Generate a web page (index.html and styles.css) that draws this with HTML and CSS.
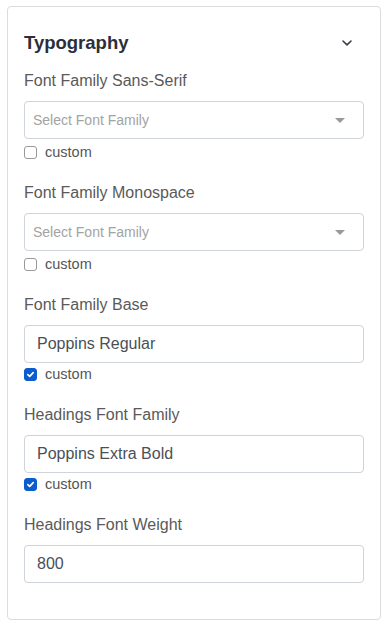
FILE: index.html
```html
<!DOCTYPE html>
<html lang="en">
<head>
<meta charset="utf-8">
<title>Typography</title>
<link rel="stylesheet" href="styles.css">
</head>
<body>
<div class="card">
  <div class="card-head">
    <h2 class="title">Typography</h2>
    <svg class="chevron" width="12" height="8" viewBox="0 0 12 8"><path d="M2 2 L6 5.8 L10 2" fill="none" stroke="#3a3d48" stroke-width="1.6" stroke-linecap="round" stroke-linejoin="round"/></svg>
  </div>

  <div class="group sel">
    <div class="label">Font Family Sans-Serif</div>
    <div class="select"><span class="placeholder">Select Font Family</span><span class="caret"></span></div>
    <label class="check"><span class="box"></span>custom</label>
  </div>

  <div class="group sel">
    <div class="label">Font Family Monospace</div>
    <div class="select"><span class="placeholder">Select Font Family</span><span class="caret"></span></div>
    <label class="check"><span class="box"></span>custom</label>
  </div>

  <div class="group">
    <div class="label">Font Family Base</div>
    <div class="input">Poppins Regular</div>
    <label class="check"><span class="box on"><svg width="9" height="9" viewBox="0 0 9 9"><path d="M1.8 4.6 L3.7 6.4 L7.2 2.6" fill="none" stroke="#fff" stroke-width="1.6" stroke-linecap="round" stroke-linejoin="round"/></svg></span>custom</label>
  </div>

  <div class="group">
    <div class="label">Headings Font Family</div>
    <div class="input">Poppins Extra Bold</div>
    <label class="check"><span class="box on"><svg width="9" height="9" viewBox="0 0 9 9"><path d="M1.8 4.6 L3.7 6.4 L7.2 2.6" fill="none" stroke="#fff" stroke-width="1.6" stroke-linecap="round" stroke-linejoin="round"/></svg></span>custom</label>
  </div>

  <div class="group last">
    <div class="label">Headings Font Weight</div>
    <div class="input">800</div>
  </div>
</div>
</body>
</html>
```
FILE: styles.css
```css
* { box-sizing: border-box; }
html, body { margin: 0; background: #fff; }
body {
  padding: 6px 7px;
  font-family: "Liberation Sans", Arial, sans-serif;
}
.card {
  border: 1px solid #dcdcdc;
  border-radius: 4px;
  padding: 23px 16px 36px;
  height: 614px;
}
.card-head {
  display: flex;
  align-items: center;
  justify-content: space-between;
  height: 26px;
  margin-bottom: 15px;
}
.title {
  margin: 0;
  font-size: 18.5px;
  font-weight: 700;
  color: #2b2f3b;
  line-height: 26px;
}
.chevron { margin-right: 11px; }
.label {
  font-size: 16px;
  line-height: 20px;
  color: #5a5a5a;
  margin-bottom: 10px;
}
.group { margin-bottom: 21px; }
.select, .input {
  height: 38px;
  border: 1px solid #ced4da;
  border-radius: 4px;
  display: flex;
  align-items: center;
  background: #fff;
}
.select { padding: 0 18px 0 8px; justify-content: space-between; }
.placeholder { font-size: 14px; color: #a3a3a3; }
.caret {
  width: 0; height: 0;
  border-left: 5px solid transparent;
  border-right: 5px solid transparent;
  border-top: 5px solid #999;
}
.input {
  padding: 0 12px;
  font-size: 16px;
  color: #495057;
}
.check {
  display: flex;
  align-items: center;
  gap: 8px;
  font-size: 14.5px;
  color: #555;
  line-height: 20px;
  margin-top: 1px;
}
.sel .check { margin-top: 3px; }
.box {
  width: 13px; height: 13px;
  border: 1px solid #999;
  border-radius: 3px;
  background: #fff;
  display: flex;
  align-items: center;
  justify-content: center;
}
.box.on { background: #0b5ccd; border-color: #0b5ccd; }
.group.last { margin-bottom: 0; }
```
